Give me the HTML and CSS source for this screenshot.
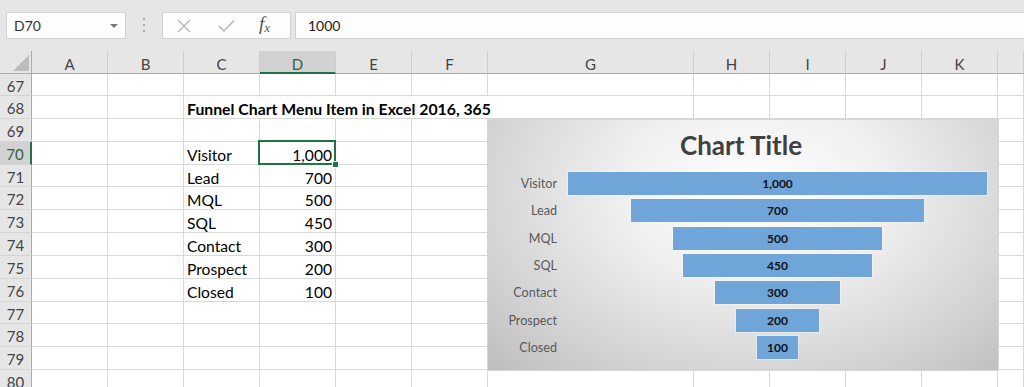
FILE: index.html
```html
<!DOCTYPE html>
<html lang="en">
<head>
    <meta charset="UTF-8">
    <title>Funnel Chart - Excel</title>
    <link rel="stylesheet" href="styles.css">
</head>
<body>

<div class="toolbar">
    <div class="namebox">
        <span>D70</span>
        <span class="caret"></span>
    </div>
    <div class="grip"><i></i><i></i><i></i></div>
    <div class="fbtns">
        <svg class="cancel" width="14" height="14" viewBox="0 0 14 14"><path d="M1 1 L13 13 M13 1 L1 13" stroke="#b4b4b4" stroke-width="1.3" fill="none"/></svg>
        <svg class="enter" width="17" height="14" viewBox="0 0 17 14"><path d="M1 7 L6 12 L16 1.5" stroke="#b4b4b4" stroke-width="1.5" fill="none"/></svg>
        <span class="fx">f<sub>x</sub></span>
    </div>
    <div class="finput">1000</div>
</div>

<div class="sheet">
    <div class="grid">
        <div class="corner"><svg width="18" height="18" viewBox="0 0 18 18"><polygon points="1,17 17,1 17,17" fill="#bcbcbc"/></svg></div>
        <div class="ch">A</div><div class="ch">B</div><div class="ch">C</div><div class="ch on">D</div><div class="ch">E</div><div class="ch">F</div><div class="ch">G</div><div class="ch">H</div><div class="ch">I</div><div class="ch">J</div><div class="ch">K</div><div class="ch"></div>

        <div class="rh">67</div><div></div><div></div><div></div><div></div><div></div><div></div><div></div><div></div><div></div><div></div><div></div><div></div>
        <div class="rh">68</div><div></div><div></div><div class="title">Funnel Chart Menu Item in Excel 2016, 365</div><div></div><div></div><div></div><div></div><div></div>
        <div class="rh">69</div><div></div><div></div><div></div><div></div><div></div><div></div><div></div><div></div><div></div><div></div><div></div><div></div>
        <div class="rh on">70</div><div></div><div></div><div>Visitor</div><div class="num sel">1,000</div><div></div><div></div><div></div><div></div><div></div><div></div><div></div><div></div>
        <div class="rh">71</div><div></div><div></div><div>Lead</div><div class="num">700</div><div></div><div></div><div></div><div></div><div></div><div></div><div></div><div></div>
        <div class="rh">72</div><div></div><div></div><div>MQL</div><div class="num">500</div><div></div><div></div><div></div><div></div><div></div><div></div><div></div><div></div>
        <div class="rh">73</div><div></div><div></div><div>SQL</div><div class="num">450</div><div></div><div></div><div></div><div></div><div></div><div></div><div></div><div></div>
        <div class="rh">74</div><div></div><div></div><div>Contact</div><div class="num">300</div><div></div><div></div><div></div><div></div><div></div><div></div><div></div><div></div>
        <div class="rh">75</div><div></div><div></div><div>Prospect</div><div class="num">200</div><div></div><div></div><div></div><div></div><div></div><div></div><div></div><div></div>
        <div class="rh">76</div><div></div><div></div><div>Closed</div><div class="num">100</div><div></div><div></div><div></div><div></div><div></div><div></div><div></div><div></div>
        <div class="rh">77</div><div></div><div></div><div></div><div></div><div></div><div></div><div></div><div></div><div></div><div></div><div></div><div></div>
        <div class="rh">78</div><div></div><div></div><div></div><div></div><div></div><div></div><div></div><div></div><div></div><div></div><div></div><div></div>
        <div class="rh">79</div><div></div><div></div><div></div><div></div><div></div><div></div><div></div><div></div><div></div><div></div><div></div><div></div>
        <div class="rh">80</div><div></div><div></div><div></div><div></div><div></div><div></div><div></div><div></div><div></div><div></div><div></div><div></div>
    </div>

    <div class="chart">
        <div class="chart-title">Chart Title</div>
        <div class="plot">
            <div class="stage"><span class="cat">Visitor</span><div class="track"><div class="bar" style="width:100%">1,000</div></div></div>
            <div class="stage"><span class="cat">Lead</span><div class="track"><div class="bar" style="width:70%">700</div></div></div>
            <div class="stage"><span class="cat">MQL</span><div class="track"><div class="bar" style="width:50%">500</div></div></div>
            <div class="stage"><span class="cat">SQL</span><div class="track"><div class="bar" style="width:45%">450</div></div></div>
            <div class="stage"><span class="cat">Contact</span><div class="track"><div class="bar" style="width:30%">300</div></div></div>
            <div class="stage"><span class="cat">Prospect</span><div class="track"><div class="bar" style="width:20%">200</div></div></div>
            <div class="stage"><span class="cat">Closed</span><div class="track"><div class="bar" style="width:10%">100</div></div></div>
        </div>
    </div>
</div>

</body>
</html>
```

FILE: styles.css
```css
body {
    margin: 0;
    font-family: Lato, 'Liberation Sans', sans-serif;
    background: #fff;
    color: #000;
    overflow: hidden;
}

/* formula bar */
.toolbar {
    display: flex;
    align-items: flex-start;
    height: 51px;
    box-sizing: border-box;
    padding: 12px 0 0 6px;
    background: #e6e6e6;
}
.namebox, .fbtns, .finput {
    height: 27px;
    box-sizing: border-box;
    background: #fdfdfd;
    border: 1px solid #d2d2d2;
}
.namebox {
    width: 120px;
    display: flex;
    align-items: center;
    justify-content: space-between;
    padding: 0 7px 0 7px;
    font-size: 14px;
    color: #333;
}
.caret {
    width: 0;
    height: 0;
    border-left: 4px solid transparent;
    border-right: 4px solid transparent;
    border-top: 4px solid #7a7a7a;
}
.grip {
    width: 36px;
    display: flex;
    flex-direction: column;
    align-items: center;
    gap: 4px;
    padding-top: 6px;
}
.grip i {
    width: 2px;
    height: 2px;
    background: #a8a8a8;
}
.fbtns {
    width: 129px;
    display: flex;
    align-items: center;
    padding: 0 0 0 14px;
}
.fbtns .enter {
    margin-left: 27px;
}
.fx {
    margin-left: 24px;
    font-family: 'Liberation Serif', serif;
    font-style: italic;
    font-size: 19px;
    color: #555;
    line-height: 20px;
}
.fx sub {
    font-size: 13px;
    vertical-align: -2px;
}
.finput {
    flex: 1;
    margin-left: 4px;
    margin-right: -2px;
    padding: 0 12px;
    font-size: 14px;
    line-height: 25px;
    color: #222;
}

/* sheet grid */
.sheet {
    position: relative;
}
.grid {
    display: grid;
    grid-template-columns: 32px 76px 76px 76px 76px 76px 76px 206px 76px 76px 76px 76px 1fr;
    grid-template-rows: 23px 22px 23px 23px 23px 22px 23px 23px 23px 23px 23px 22px 23px 23px 23px;
    font-size: 15.6px;
}
.grid > div {
    box-sizing: border-box;
    border-right: 1px solid #d9d9d9;
    border-bottom: 1px solid #d9d9d9;
    padding: 2px 3px 0 3px;
    line-height: 22px;
    white-space: nowrap;
}
.grid > .num {
    text-align: right;
}
.grid > .title {
    grid-column: span 5;
    font-weight: bold;
    font-size: 15.8px;
}
.grid > .corner {
    background: #e6e6e6;
    border-right: 1px solid #ababab;
    border-bottom: 1px solid #ababab;
    padding: 3px 0 0 12px;
}
.grid > .ch {
    background: #e6e6e6;
    border-right: 1px solid #cdcdcd;
    border-bottom: 1px solid #ababab;
    text-align: center;
    color: #444;
    font-size: 15px;
    line-height: 22px;
}
.grid > .ch.on {
    background: #d2d2d2;
    border-bottom: 2px solid #217346;
    color: #2f6048;
}
.grid > .rh {
    background: #e6e6e6;
    border-right: 1px solid #ababab;
    border-bottom: 1px solid #d4d4d4;
    text-align: center;
    color: #444;
    font-size: 15px;
    padding: 1px 0 0 0;
}
.grid > .rh.on {
    background: #d2d2d2;
    border-right: 2px solid #217346;
    color: #2f6048;
}
.grid > .sel {
    position: relative;
}
.sel::before {
    content: "";
    position: absolute;
    left: -2px;
    top: -2px;
    right: -1px;
    bottom: -1px;
    border: 2px solid #217346;
}
.sel::after {
    content: "";
    position: absolute;
    right: -4px;
    bottom: -4px;
    width: 5px;
    height: 5px;
    background: #217346;
    border: 1px solid #fff;
}

/* funnel chart */
.chart {
    position: absolute;
    left: 487px;
    top: 68px;
    width: 512px;
    height: 252px;
    box-sizing: border-box;
    border: 1px solid #d6d6d6;
    background: radial-gradient(farthest-corner at 52% 28%, #ffffff 0%, #f0f0f0 35%, #d6d6d6 70%, #bdbdbd 100%);
    display: flex;
    flex-direction: column;
}
.chart-title {
    text-align: center;
    font-weight: bold;
    font-size: 26px;
    line-height: 30px;
    color: #404040;
    padding-top: 10px;
    height: 40px;
    position: relative;
    left: -2px;
}
.plot {
    height: 191px;
    display: flex;
    flex-direction: column;
}
.stage {
    flex: 1;
    display: grid;
    grid-template-columns: 69px 411px;
    column-gap: 11px;
    align-items: center;
}
.cat {
    text-align: right;
    font-size: 12.6px;
    color: #595959;
}
.track {
    display: flex;
    justify-content: center;
    width: 419px;
}
.bar {
    height: 23px;
    background: #6fa5d8;
    box-shadow: 0 0 0 1px rgba(255,255,255,0.35);
    font-size: 12px;
    font-weight: bold;
    line-height: 23px;
    text-align: center;
    color: #111;
}
```
